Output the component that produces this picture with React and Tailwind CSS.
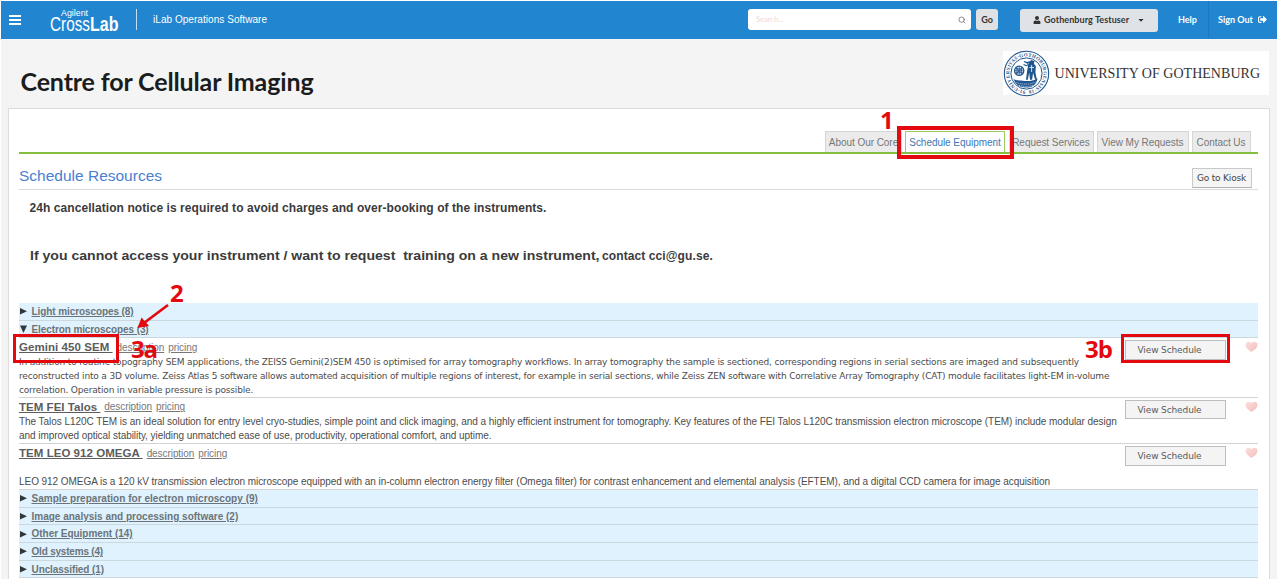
import React from "react";
import { FaUser, FaCaretDown, FaSignOutAlt } from "react-icons/fa";
import { FiSearch } from "react-icons/fi";

function CrossLabLogo() {
  return (
    <svg width="74" height="28" viewBox="0 0 74 28" className="shrink-0 fill-white font-['Liberation_Sans',sans-serif] font-normal">
      <text x="11" y="10" fontSize="9.500" textLength="27" lengthAdjust="spacingAndGlyphs">Agilent</text>
      <text x="0" y="25" fontSize="21" textLength="40" lengthAdjust="spacingAndGlyphs">Cross</text>
      <text x="40" y="25" fontSize="20" fontWeight="700" textLength="28.500" lengthAdjust="spacingAndGlyphs">Lab</text>
    </svg>
  );
}

function Seal() {
  return (
    <svg width="47" height="47" viewBox="0 0 47 47" className="shrink-0">
      <g fill="none" stroke="#20568f">
        <circle cx="23.5" cy="23.5" r="22.2" strokeWidth="1.1" />
        <circle cx="23.5" cy="23.5" r="15.6" strokeWidth="1" />
      </g>
      <path id="ring" d="M23.5 40.6 a17.1 17.1 0 1 1 0.01 0" fill="none" />
      <text fontSize="5" fontWeight="700" fill="#20568f" className="font-['Liberation_Serif',serif]">
        <textPath href="#ring" startOffset="1" textLength="104">91·UNIVERSITAS·GOTHOBURGENSIS·18</textPath>
      </text>
      <g fill="none" stroke="#20568f" strokeWidth="0.9">
        <circle cx="16.2" cy="20.8" r="4.6" strokeWidth="1.3" />
        <path d="M11.8 20.8h9M16.2 16.4v9M13 17.7l6.4 6.2M19.4 17.7L13 23.9M14 16.8v8M18.4 16.8v8M12.2 18.8h8M12.2 22.8h8" />
        <path d="M21 11.5l3 1.2 3-.8M24 12.5l2 4M20.5 14.5l4 1.5" strokeWidth="1.3" />
      </g>
      <path
        d="M26 12l2.5-2 3 1.2-.6 2.6 2 2.4-.5 6 1.5 7.5h-1.8l-2-7-1 7H27l-.8-7-1.4 7H23l1.2-9.5z"
        fill="#20568f"
      />
      <path d="M28.6 15v7M26.5 17.5h4.5" stroke="#fff" strokeWidth="0.8" />
      <path
        d="M10.4 28.5c3 2.8 6 1.6 9 2.2 5 .7 10 .7 15.2-2.2-.8 4-3 7.5-8 8.7-6.4 1-14-.8-16.2-8.7z"
        fill="#20568f"
      />
      <path d="M13.5 32.4c6 2.4 14 2.4 19-.6M16 35.2c5 1.7 10 1.6 14 0" fill="none" stroke="#fff" strokeWidth="0.6" strokeDasharray="1.2 0.7" />
    </svg>
  );
}

function Heart() {
  return (
    <svg width="13" height="12" viewBox="0 0 13 12">
      <defs>
        <linearGradient id="heart" x1="0" y1="0" x2="1" y2="1">
          <stop offset="0" stopColor="#fbe0dd" />
          <stop offset="1" stopColor="#f3bcba" />
        </linearGradient>
      </defs>
      <path d="M6.5 11C4 9.400.5 7 .5 3.800c0-2 1.400-3.100 3-3.100S6 1.600 6.500 2.300C7 1.600 8 .7 9.500.7s3 1.100 3 3.100c0 3.200-3.500 5.600-6 7.200z" fill="url(#heart)" />
    </svg>
  );
}

function Category({ name, open = false, className = "" }) {
  return (
    <div className={"flex h-[17.7px] items-center border-b border-[#cbd8de] bg-[#dff2fd] " + className}>
      <svg width="8" height="8" viewBox="0 0 8 8" className="ml-px shrink-0 fill-[#30383c]">
        <path d={open ? "M0 .5h7l-3.500 7.500z" : "M0 1v6.500l7-3.250z"} />
      </svg>
      <a className="ml-[3.500px] mt-[1.600px] text-[10px] font-bold leading-[14px] text-[#6b747b] underline">{name}</a>
    </div>
  );
}

function Resource({ name, className, nameClass, children }) {
  return (
    <div className={"flex border-b border-[#d3d3d3] pt-px " + className}>
      <div className="flex w-[1106px] flex-col whitespace-nowrap text-[#4c4c4c]">
        <div className="flex h-4 items-center">
          <a className={"whitespace-pre text-[11.5px] font-bold leading-4 text-[#5c5c5c] underline " + nameClass}>{name + " "}</a>
          <a className="ml-[4px] text-[10px] tracking-[-0.07px] text-[#777] underline">description</a>
          <a className="ml-1 text-[10px] tracking-[-0.07px] text-[#777] underline">pricing</a>
        </div>
        {children}
      </div>
      <div className="mt-px flex h-[19.500px] w-[101px] items-center border border-[#bdbdbd] bg-[#f4f4f4] pl-[11.500px] pt-[2px] font-['DejaVu_Sans',sans-serif] text-[9px] tracking-[-0.12px] text-[#5a5a5a]">
        View Schedule
      </div>
      <div className="ml-[19px] mt-[2px]">
        <Heart />
      </div>
    </div>
  );
}

const tabs = [
  { name: "About Our Core", box: "w-[77px] pl-px" },
  { name: "Schedule Equipment", box: "w-[100px] pl-px", active: true },
  { name: "Request Services", box: "ml-px w-[85px]" },
  { name: "View My Requests", box: "w-[92px]" },
  { name: "Contact Us", box: "w-[59px]" },
];

export default function App() {
  return (
    <div className="relative flex h-[579px] w-[1277px] flex-col overflow-hidden border-l border-t border-white bg-[#f4f4f4] font-['Liberation_Sans',Arial,sans-serif]">
      <header className="flex h-[38px] shrink-0 items-center bg-[#2185d0] pb-px font-['Lato',sans-serif] text-[9px] font-bold text-white">
        <div className="ml-2 flex w-3 flex-col gap-[2px]">
          <span className="h-[2px] bg-white" />
          <span className="h-[2px] bg-white" />
          <span className="h-[2px] bg-white" />
        </div>
        <div className="ml-[29px] flex">
          <CrossLabLogo />
        </div>
        <span className="ml-3 h-[21px] w-px bg-[#c4def2]" />
        <span className="ml-4 w-[595px] font-['Liberation_Sans',sans-serif] text-[10px] font-normal tracking-[0.05px]">
          iLab Operations Software
        </span>
        <div className="flex h-[21px] w-[223px] items-center justify-between rounded-[3px] bg-white pl-2 pr-[5px] font-normal text-[#e8dada]">
          <span className="text-[7.500px]">Search...</span>
          <FiSearch size={8} color="#555" />
        </div>
        <span className="ml-[5px] flex h-[21px] w-[22px] items-center justify-center rounded-[3px] bg-[#e0e1e2] text-[#333]">Go</span>
        <div className="ml-[22px] mt-px flex h-[23px] w-[138px] items-center rounded-[3px] bg-[#dfe3e8] pl-[13px] text-[#333]">
          <FaUser size={8} />
          <span className="ml-[3px] tracking-[0.08px]">Gothenburg Testuser</span>
          <FaCaretDown size={8} className="ml-2" />
        </div>
        <span className="ml-5 mt-px w-[30px]">Help</span>
        <span className="h-full w-px bg-[#1c78bd]" />
        <span className="ml-[9px] mt-px">Sign Out</span>
        <FaSignOutAlt size={9} className="ml-[5px]" />
      </header>

      <div className="flex h-[69px] shrink-0 items-start justify-between pl-[19.500px] pr-2">
        <h1 className="mt-[26px] font-['Lato',sans-serif] text-[25px] font-bold leading-8 tracking-[-0.14px] text-[#1b1c1d]">
          Centre for Cellular Imaging
        </h1>
        <div className="mt-3 flex h-[44px] w-[266px] items-center bg-white font-['Liberation_Serif',serif] text-[14px] text-[#333]">
          <Seal />
          <span className="ml-[4.500px] whitespace-nowrap tracking-[0.03px]">UNIVERSITY OF GOTHENBURG</span>
        </div>
      </div>

      <main className="ml-[7px] flex h-[480px] w-[1262px] shrink-0 flex-col border border-[#dcdcdc] bg-white pl-[10px] pr-[11px]">
        <nav className="mt-[22px] flex h-[23px] shrink-0 justify-end gap-[3px] border-b-2 border-[#85bd3f] pr-[7.500px]">
          {tabs.map((tab) => (
            <span
              key={tab.name}
              className={
                "flex items-center justify-center whitespace-nowrap border border-b-0 text-[10px] tracking-[-0.05px] " +
                tab.box +
                (tab.active ? " border-[#9ccc62] bg-white text-[#3a78b5]" : " border-[#d6d6d6] bg-[#ebebeb] text-[#777]")
              }
            >
              {tab.name}
            </span>
          ))}
        </nav>

        <div className="flex h-[36px] shrink-0 justify-between border-b border-[#dadada] pr-[6px]">
          <h2 className="mt-[10px] text-[15.500px] leading-6 text-[#4a80cf]">Schedule Resources</h2>
          <span className="mt-[14px] flex h-5 w-[60px] items-center justify-center border border-[#c9c9c9] border-b-[#b0b0b0] bg-[#f5f5f5] pt-[2px] pr-px font-['DejaVu_Sans',sans-serif] text-[9px] tracking-[-0.18px] text-[#444]">
            Go to Kiosk
          </span>
        </div>

        <div className="flex h-[113px] shrink-0 flex-col pl-[10.500px] font-bold text-[#3b3b3b]">
          <p className="mt-[10px] text-[12px] leading-4 tracking-[0.07px]">
            24h cancellation notice is required to avoid charges and over-booking of the instruments.
          </p>
          <p className="mt-8 flex whitespace-pre text-[12px] leading-4">
            <span className="w-[572px] origin-left scale-x-[1.083] text-[13px]">
              {"If you cannot access your instrument / want to request  training on a new instrument,"}
            </span>
            <span className="ml-[0.500px] tracking-[0.1px]">contact cci@gu.se.</span>
          </p>
        </div>

        <Category name="Light microscopes (8)" className="tracking-[-0.09px]" />
        <Category name="Electron microscopes (3)" open className="tracking-[-0.1px]" />

        <Resource name="Gemini 450 SEM" className="h-[59.600px]" nameClass="tracking-[0.06px]">
          <p className="mt-px font-['DejaVu_Sans',sans-serif] text-[9px] leading-[13.700px] tracking-[-0.165px]">
            In addition to routine topography SEM applications, the ZEISS Gemini(2)SEM 450 is optimised for array tomography workflows. In array tomography the sample is sectioned, corresponding regions in serial sections are imaged and subsequently
            <br />
            reconstructed into a 3D volume. Zeiss Atlas 5 software allows automated acquisition of multiple regions of interest, for example in serial sections, while Zeiss ZEN software with Correlative Array Tomography (CAT) module facilitates light-EM in-volume
            <br />
            correlation. Operation in variable pressure is possible.
          </p>
        </Resource>
        <Resource name="TEM FEI Talos" className="h-[46.500px]" nameClass="tracking-[0.03px]">
          <p className="text-[10px] leading-[13.700px] tracking-[-0.052px]">
            The Talos L120C TEM is an ideal solution for entry level cryo-studies, simple point and click imaging, and a highly efficient instrument for tomography. Key features of the FEI Talos L120C transmission electron microscope (TEM) include modular design
            <br />
            and improved optical stability, yielding unmatched ease of use, productivity, operational comfort, and uptime.
          </p>
        </Resource>
        <Resource name="TEM LEO 912 OMEGA" className="h-[45.500px]" nameClass="tracking-[0.04px]">
          <p className="mt-[13.700px] text-[10px] leading-[13.700px] tracking-[-0.052px]">
            LEO 912 OMEGA is a 120 kV transmission electron microscope equipped with an in-column electron energy filter (Omega filter) for contrast enhancement and elemental analysis (EFTEM), and a digital CCD camera for image acquisition
          </p>
        </Resource>

        <Category name="Sample preparation for electron microscopy (9)" className="tracking-[0.03px]" />
        <Category name="Image analysis and processing software (2)" />
        <Category name="Other Equipment (14)" className="tracking-[-0.03px]" />
        <Category name="Old systems (4)" className="tracking-[-0.2px]" />
        <Category name="Unclassified (1)" className="tracking-[-0.09px]" />
      </main>

      <div className="pointer-events-none absolute inset-0 font-['Open_Sans',sans-serif] text-[24px] font-bold leading-6 text-[#e3090f]">
        <span className="absolute left-[879px] top-[107px]">1</span>
        <span className="absolute left-[169px] top-[280px]">2</span>
        <span className="absolute left-[130px] top-[336px] tracking-[-1.100px]">3a</span>
        <span className="absolute left-[1084px] top-[336px] tracking-[-1px]">3b</span>
        <div className="absolute left-[896px] top-[125px] h-[33px] w-[117px] border-4 border-[#e3090f]" />
        <div className="absolute left-[12px] top-[333px] h-[29px] w-[106px] border-3 border-[#e3090f]" />
        <div className="absolute left-[1120px] top-[333px] h-[29px] w-[109px] border-3 border-[#e3090f]" />
        <svg width="40" height="32" viewBox="0 0 40 32" className="absolute left-[134px] top-[299px]">
          <path d="M33 5L9 23" stroke="#e3090f" strokeWidth="2.800" />
          <path d="M2.500 28L6.500 17.500L14 26z" fill="#e3090f" />
        </svg>
      </div>
    </div>
  );
}
